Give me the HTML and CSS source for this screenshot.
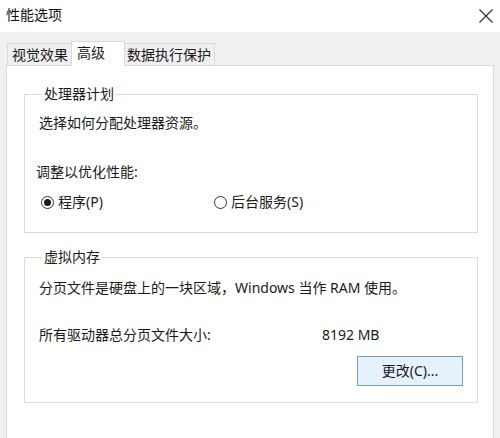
FILE: index.html
```html
<!DOCTYPE html>
<html lang="zh-CN">
<head>
<meta charset="utf-8">
<title>性能选项</title>
<link rel="stylesheet" href="styles.css">
</head>
<body>
<div class="window">
  <div class="titlebar">
    <span class="title">性能选项</span>
    <svg class="close" width="14" height="14" viewBox="0 0 14 14" aria-hidden="true">
      <path d="M0.5 0.5 L13.5 13.5 M13.5 0.5 L0.5 13.5" stroke="#2b2b2b" stroke-width="1.1" fill="none"/>
    </svg>
  </div>
  <div class="client">
    <div class="tabs">
      <div class="tab tab-visual">视觉效果</div>
      <div class="tab tab-adv active">高级</div>
      <div class="tab tab-dep">数据执行保护</div>
    </div>
    <div class="panel">
      <fieldset class="group group-cpu">
        <legend>处理器计划</legend>
        <div class="line desc">选择如何分配处理器资源。</div>
        <div class="line adjust">调整以优化性能:</div>
        <div class="radios">
          <label class="radio checked"><span class="dot"></span><span>程序(P)</span></label>
          <label class="radio"><span class="dot"></span><span>后台服务(S)</span></label>
        </div>
      </fieldset>
      <fieldset class="group group-vm">
        <legend>虚拟内存</legend>
        <div class="line desc">分页文件是硬盘上的一块区域，Windows 当作 RAM 使用。</div>
        <div class="size-row">
          <span>所有驱动器总分页文件大小:</span>
          <span>8192 MB</span>
        </div>
        <div class="btn-row">
          <button class="btn">更改(C)...</button>
        </div>
      </fieldset>
    </div>
  </div>
</div>
</body>
</html>
```

FILE: styles.css
```css
* { box-sizing: border-box; }
html, body {
  margin: 0;
  padding: 0;
  width: 500px;
  height: 438px;
  overflow: hidden;
}
body {
  font-family: "Noto Sans", "Noto Sans CJK SC", sans-serif;
  font-size: 14px;
  line-height: 20px;
  color: #1a1a1a;
  background: #f0f0f0;
}
.window {
  height: 438px;
  display: flex;
  flex-direction: column;
}
.titlebar {
  height: 32px;
  background: #ffffff;
  display: flex;
  align-items: center;
  justify-content: space-between;
  padding: 0 7px 2px 6px;
}
.title { color: #111; }
.close { display: block; margin-top: 1px; }

.client {
  flex: 1;
  display: flex;
  flex-direction: column;
  padding: 0 6px;
  background: #f0f0f0;
}
.tabs {
  display: flex;
  align-items: flex-end;
  padding: 9px 0 0 1px;
}
.tab {
  height: 22px;
  border: 1px solid #d9d9d9;
  border-bottom: none;
  background: #f0f0f0;
  padding-top: 1px;
  white-space: nowrap;
}
.tab-visual { width: 65px; padding-left: 4px; }
.tab-adv { width: 54px; margin-left: -1px; padding-left: 5px; }
.tab-dep { width: 91px; margin-left: -1px; padding-left: 3px; border-left: none; }
.tab.active {
  height: 25px;
  background: #ffffff;
  margin-bottom: -1px;
  position: relative;
  z-index: 1;
}
.panel {
  flex: 1;
  background: #ffffff;
  border: 1px solid #d9d9d9;
  border-bottom: none;
  padding: 18px 15px 0 17px;
}
.group {
  margin: 0;
  padding: 0 0 20px 14px;
  border: 1px solid #dcdcdc;
  min-width: 0;
}
.group legend {
  padding: 0 2px;
  margin-left: 3px;
  line-height: 20px;
}
.group-cpu .desc { margin-top: 9px; }
.adjust { margin-top: 29px; margin-left: -3px; }
.radios {
  margin-top: 10px;
  display: grid;
  grid-template-columns: 173px auto;
  margin-left: 2px;
}
.radio {
  display: flex;
  align-items: center;
  gap: 4px;
}
.dot {
  width: 13px;
  height: 13px;
  border: 1px solid #333;
  border-radius: 50%;
  display: flex;
  align-items: center;
  justify-content: center;
}
.radio.checked .dot::after {
  content: "";
  width: 7px;
  height: 7px;
  border-radius: 50%;
  background: #1a1a1a;
}
.group-vm {
  margin-top: 14px;
  padding-bottom: 16px;
}
.group-vm .desc { margin-top: 11px; }
.size-row {
  margin-top: 27px;
  display: grid;
  grid-template-columns: 283px auto;
}
.btn-row {
  margin-top: 11px;
  display: flex;
  justify-content: flex-end;
  padding-right: 14px;
}
.btn {
  width: 106px;
  height: 30px;
  font: inherit;
  color: #1a1a1a;
  background: #e5f1fb;
  border: 1px solid #6f9cc2;
  padding: 0;
}
```
